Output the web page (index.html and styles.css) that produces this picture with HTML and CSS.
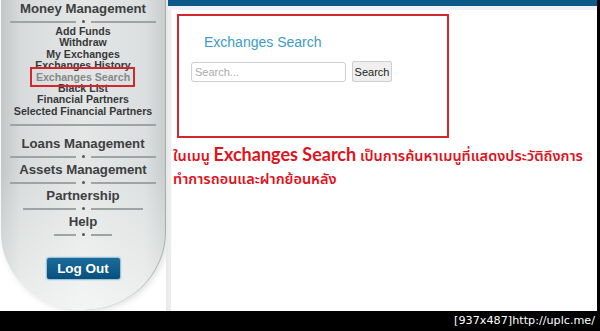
FILE: index.html
```html
<!DOCTYPE html><html lang="en">
<head>
  <meta charset="UTF-8">
  <meta name="viewport" content="width=device-width, initial-scale=1.0">
  <title>Exchanges Search</title>
  <link rel="stylesheet" href="styles.css">
</head>
<body>
  <div class="frame">
    <div class="screen">
      <nav class="sidebar">
        <div class="section">
          <div class="heading">Money Management</div>
          <div class="sep wide"><i></i></div>
          <ul class="submenu">
            <li>Add Funds</li>
            <li>Withdraw</li>
            <li>My Exchanges</li>
            <li>Exchanges History</li>
            <li><span class="current">Exchanges Search</span></li>
            <li>Black List</li>
            <li>Financial Partners</li>
            <li>Selected Financial Partners</li>
          </ul>
          <div class="sep wide plain"></div>
        </div>
        <div class="section first">
          <div class="heading">Loans Management</div>
          <div class="sep wide"><i></i></div>
        </div>
        <div class="section">
          <div class="heading">Assets Management</div>
          <div class="sep wide"><i></i></div>
        </div>
        <div class="section">
          <div class="heading">Partnership</div>
          <div class="sep mid"><i></i></div>
        </div>
        <div class="section">
          <div class="heading">Help</div>
          <div class="sep short"><i></i></div>
        </div>
        <button class="logout">Log Out</button>
      </nav>
      <div class="gutter"></div>
      <main class="main">
        <div class="topbar"></div>
        <div class="topbar-shade"></div>
        <div class="content">
          <div class="search-box">
            <h2 class="title">Exchanges Search</h2>
            <form class="search-form">
              <input type="text" class="search-input" placeholder="Search...">
              <button type="button" class="search-btn">Search</button>
            </form>
          </div>
          <p class="note">ในเมนู <b>Exchanges Search</b> เป็นการค้นหาเมนูที่แสดงประวัติถึงการ<br>ทำการถอนและฝากย้อนหลัง</p>
        </div>
      </main>
    </div>
    <div class="footer">[937x487]http://uplc.me/</div>
  </div>
</body>
</html>
```

FILE: styles.css
```css
body {
  margin: 0;
  background: #000;
  font-family: "Liberation Sans", Arial, sans-serif;
}
.frame {
  width: 600px;
  height: 331px;
  background: #000;
  overflow: hidden;
}
.screen {
  width: 597px;
  height: 311px;
  display: flex;
  background: #fff;
  overflow: hidden;
}
.sidebar {
  width: 164px;
  height: 310px;
  margin-left: 1px;
  flex-shrink: 0;
  border-right: 1px solid #a8acac;
  border-radius: 0 0 82px 82px / 0 0 78px 78px;
  background:
    linear-gradient(to bottom, rgba(255,255,255,0) 55%, rgba(255,255,255,0.55) 100%),
    linear-gradient(to right, #c3c7c7 0, #d8dbdb 12%, #e5e7e7 50%, #dcdfdf 88%, #c9cdcd 100%);
  box-shadow: 2px 2px 6px rgba(0,0,0,0.12);
  text-align: center;
  color: #3c4040;
}
.heading {
  font-weight: bold;
  font-size: 13.2px;
  line-height: 16px;
  padding-top: 1px;
}
.section.first {
  margin-top: 6px;
}
.sep {
  height: 9px;
  margin: 0 auto;
  display: flex;
  align-items: center;
  gap: 6px;
}
.sep::before, .sep::after {
  content: '';
  flex: 1;
  height: 2px;
  background: #9ea3a3;
}
.sep i {
  width: 3px;
  height: 3px;
  border-radius: 50%;
  background: #555;
}
.sep.plain {
  margin-top: 3px;
}
.sep.plain::after {
  display: none;
}
.sep.wide { width: 146px; }
.sep.mid { width: 120px; }
.sep.short { width: 58px; }
.submenu {
  list-style: none;
  margin: 0;
  padding: 0;
  font-weight: bold;
  font-size: 10.6px;
  line-height: 11.4px;
  color: #363939;
}
.current {
  position: relative;
  color: #858989;
}
.current::after {
  content: '';
  position: absolute;
  left: -6px;
  right: -5px;
  top: -4px;
  bottom: -4px;
  border: 2px solid #d4262c;
}
.logout {
  display: block;
  margin: 18px auto 0;
  width: 75px;
  height: 23px;
  padding: 0;
  border: 1px solid #9cc3d8;
  border-radius: 3px;
  background: linear-gradient(to bottom, #1b6c9c, #07507d);
  color: #fff;
  font-family: "Liberation Sans", Arial, sans-serif;
  font-weight: bold;
  font-size: 13.5px;
  box-shadow: 0 0 0 1px #d8e4ea;
}
.gutter {
  width: 2px;
  flex-shrink: 0;
  background: #e8eaea;
}
.main {
  flex: 1;
  display: flex;
  flex-direction: column;
}
.topbar {
  height: 6px;
  background: #0c5886;
}
.topbar-shade {
  height: 4px;
  background: #eef2f6;
}
.content {
  flex: 1;
  padding: 4px 0 0 6px;
  border-left: 3px solid #ececec;
}
.search-box {
  width: 256px;
  height: 120px;
  border: 2px solid #d4262c;
  padding: 0 0 0 12px;
}
.title {
  margin: 17px 0 0 13px;
  font-weight: normal;
  font-size: 14px;
  line-height: 18px;
  color: #3b9cc6;
}
.search-form {
  display: flex;
  align-items: center;
  gap: 6px;
  margin-top: 10px;
}
.search-input {
  width: 155px;
  height: 20px;
  box-sizing: border-box;
  border: 1px solid #cfcfcf;
  border-radius: 3px;
  padding: 0 3px;
  font-family: "Liberation Sans", Arial, sans-serif;
  font-size: 11px;
}
.search-input::placeholder {
  color: #aaa;
}
.search-btn {
  width: 40px;
  height: 21px;
  padding: 0;
  border: 1px solid #cfcfcf;
  border-radius: 2px;
  background: #efefef;
  font-family: "Liberation Sans", Arial, sans-serif;
  font-size: 11px;
  color: #222;
}
.note {
  margin: 5px 0 0 -4px;
  color: #e0121c;
  font-family: "Noto Sans Thai", Tahoma, "Loma", "Garuda", sans-serif;
  font-weight: 600;
  font-size: 14.5px;
  line-height: 23px;
  white-space: nowrap;
}
.note b {
  font-family: Lato, "Liberation Sans", sans-serif;
  font-weight: bold;
  font-size: 18px;
}
.footer {
  height: 20px;
  line-height: 20px;
  text-align: right;
  padding-right: 5px;
  color: #fff;
  font-family: "DejaVu Sans", sans-serif;
  font-size: 11.2px;
}
```
